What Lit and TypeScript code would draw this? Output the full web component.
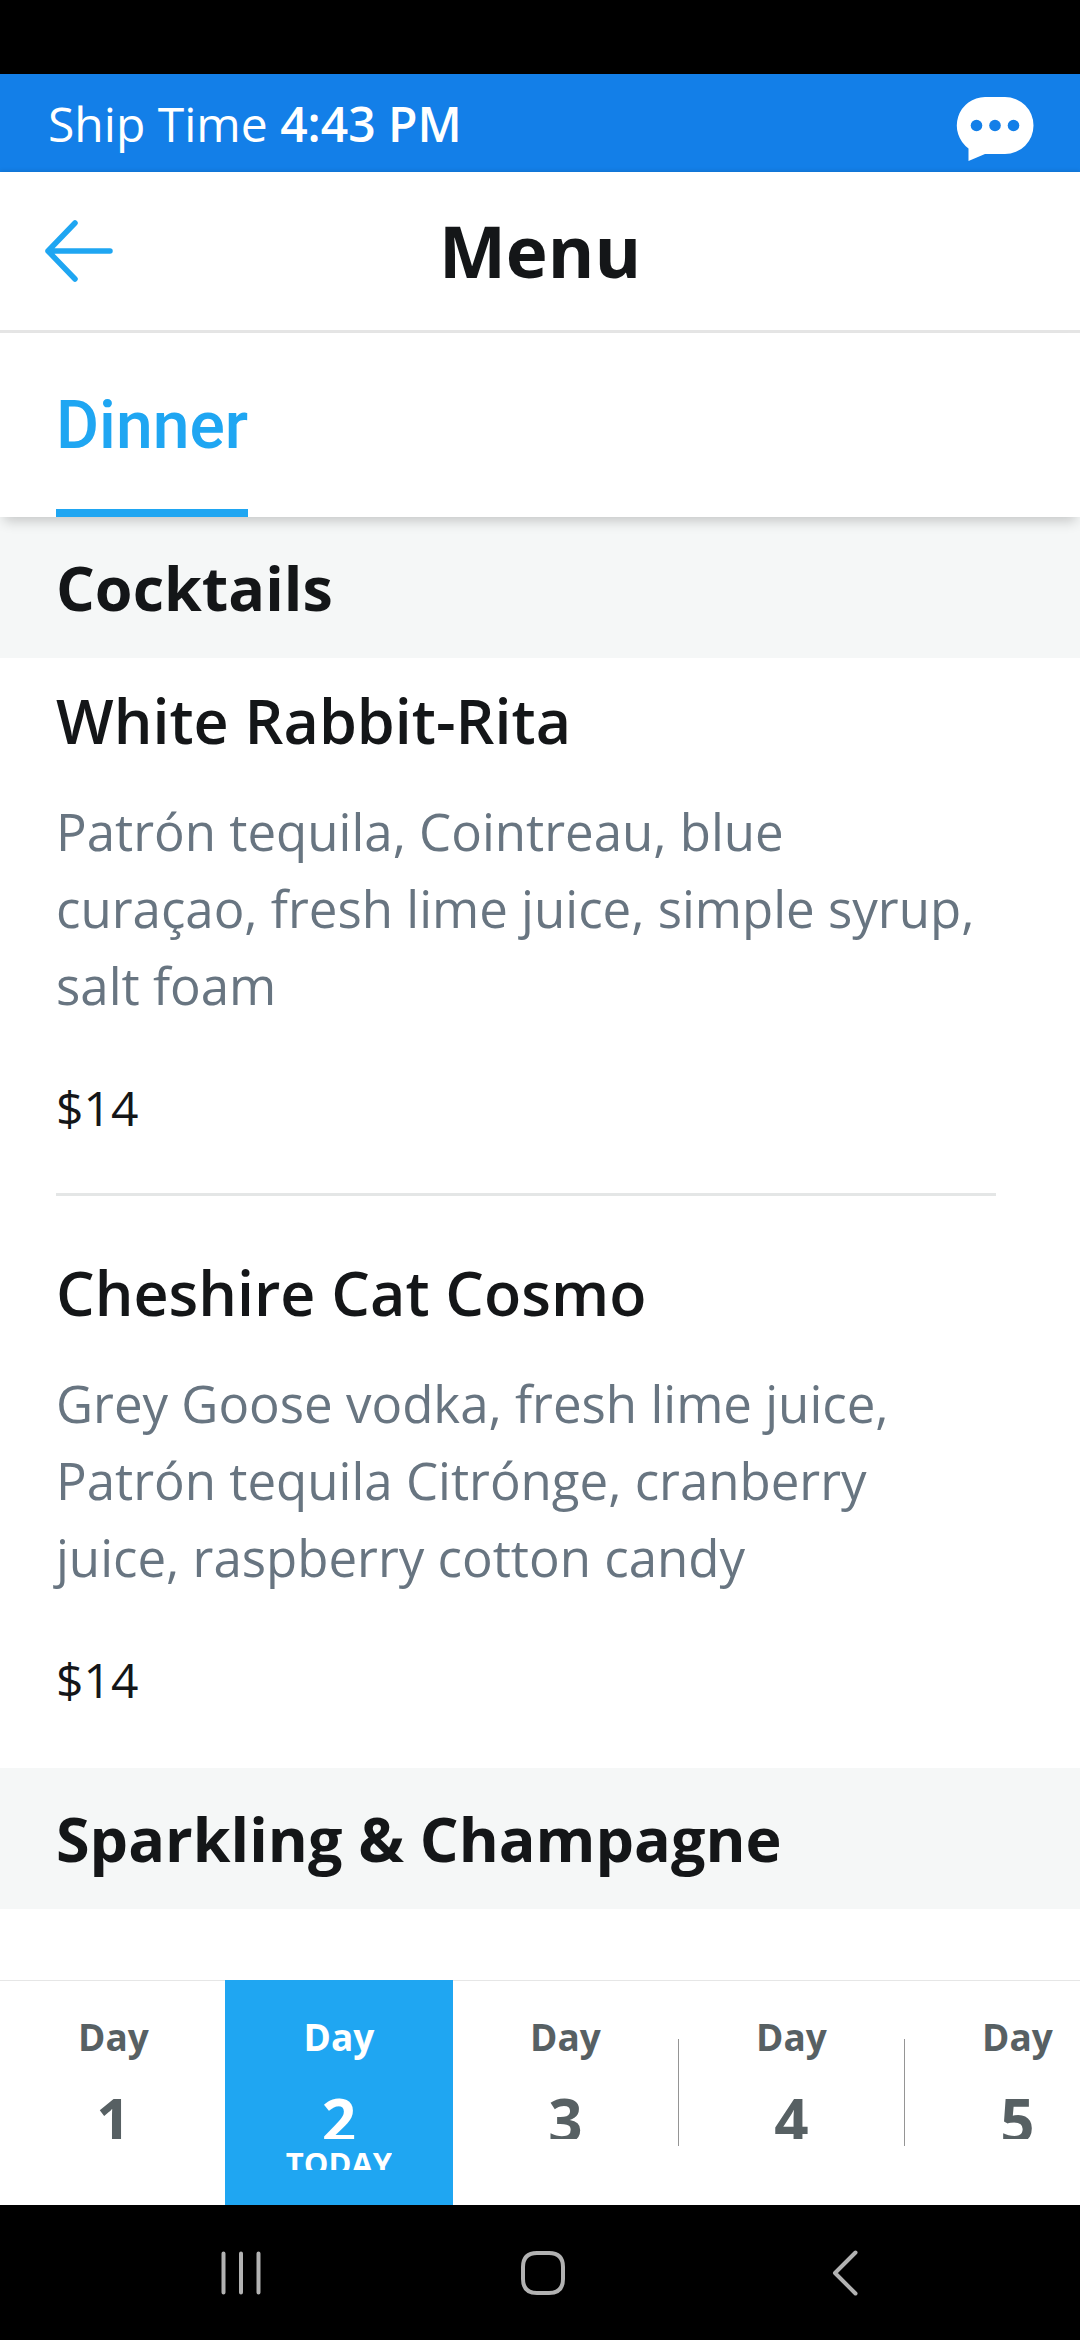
import { LitElement, html, css, nothing } from "lit";
import { customElement, property, state } from "lit/decorators.js";
import { classMap } from "lit/directives/class-map.js";

interface Dish {
  name: string;
  description: string;
  price: string;
}

interface Section {
  title: string;
  dishes: Dish[];
}

const SECTIONS: Section[] = [
  {
    title: "Cocktails",
    dishes: [
      {
        name: "White Rabbit-Rita",
        description:
          "Patrón tequila, Cointreau, blue curaçao, fresh lime juice, simple syrup, salt foam",
        price: "$14",
      },
      {
        name: "Cheshire Cat Cosmo",
        description:
          "Grey Goose vodka, fresh lime juice, Patrón tequila Citrónge, cranberry juice, raspberry cotton candy",
        price: "$14",
      },
    ],
  },
  { title: "Sparkling & Champagne", dishes: [] },
];

@customElement("ship-bar")
export class ShipBar extends LitElement {
  static styles = css`
    :host {
      display: block;
      padding-top: 74px;
      background: #000;
    }
    .bar {
      display: flex;
      align-items: center;
      justify-content: space-between;
      height: 98px;
      padding: 0 45px 0 48px;
      background: #137fe8;
      color: #fff;
      font-size: 48px;
    }
    .time {
      font-weight: 600;
    }
    .chat {
      display: flex;
      padding: 12px 0 0;
      border: 0;
      background: none;
    }
  `;

  render() {
    return html`
      <div class="bar">
        <span>Ship Time <span class="time">4:43 PM</span></span>
        <button class="chat" aria-label="Chat">
          <svg width="80" height="66" viewBox="0 0 80 66">
            <path
              fill="#fff"
              d="M30 1H50A28.500 28.500 0 0 1 50 58H30L13.500 65V52.500A28.500 28.500 0 0 1 30 1Z"
            />
            <circle cx="21.500" cy="29.500" r="5.800" fill="#137fe8" />
            <circle cx="40" cy="29.500" r="5.800" fill="#137fe8" />
            <circle cx="58.500" cy="29.500" r="5.800" fill="#137fe8" />
          </svg>
        </button>
      </div>
    `;
  }
}

@customElement("menu-section")
export class MenuSection extends LitElement {
  @property({ attribute: false }) section!: Section;

  static styles = css`
    :host {
      display: block;
    }
    h2,
    h3,
    p {
      margin: 0;
    }
    .title {
      padding: 0 56px;
      background: #f5f7f7;
      font-size: 61px;
      font-weight: 700;
      line-height: 141px;
    }
    .dish {
      margin: 0 84px 0 56px;
      padding: 55px 0 47px;
      border-bottom: 3px solid #e4e6e6;
    }
    .dish:first-of-type {
      padding-top: 21px;
    }
    .dish:last-of-type {
      border-color: transparent;
    }
    .name {
      font-size: 61px;
      font-weight: 600;
      line-height: 84px;
    }
    .description {
      margin-top: 30px;
      padding-right: 16px;
      color: #687581;
      font-size: 51px;
      line-height: 77px;
    }
    .price {
      margin-top: 45px;
      font-size: 48px;
      line-height: 77px;
    }
  `;

  render() {
    return html`
      <h2 class="title">${this.section.title}</h2>
      ${this.section.dishes.map(
        (dish) => html`
          <article class="dish">
            <h3 class="name">${dish.name}</h3>
            <p class="description">${dish.description}</p>
            <p class="price">${dish.price}</p>
          </article>
        `
      )}
    `;
  }
}

@customElement("day-strip")
export class DayStrip extends LitElement {
  @property({ type: Number }) today = 2;
  @state() private selected = 2;

  static styles = css`
    :host {
      display: flex;
      align-items: stretch;
      height: 225px;
      padding-left: 1px;
      overflow: hidden;
      background: linear-gradient(#e6e6e6 1px, #fff 1px);
    }
    .day {
      display: flex;
      flex: none;
      flex-direction: column;
      align-items: center;
      width: 225px;
      padding: 32px 0 0;
      border: 0;
      background: none;
      color: #576063;
      font: inherit;
      font-weight: 700;
    }
    .day.selected {
      width: 228px;
      margin: 0 -1px 0 -2px;
      background: #1fa6f2;
      color: #fff;
    }
    .label {
      font-size: 37px;
      line-height: 50px;
    }
    .number {
      height: 49px;
      margin-top: 28px;
      overflow: hidden;
      font-size: 60px;
      line-height: 60px;
    }
    .today {
      height: 22px;
      margin-top: 9px;
      overflow: hidden;
      font-size: 31px;
      line-height: 30px;
    }
    .rule {
      flex: none;
      width: 1px;
      margin: 59px 0;
      background: #959595;
    }
    .rule.hidden {
      background: none;
    }
  `;

  render() {
    return [1, 2, 3, 4, 5].map((day) => {
      const besideSelected = day === this.selected || day + 1 === this.selected;
      return html`
        <button
          class=${classMap({ day: true, selected: day === this.selected })}
          @click=${() => (this.selected = day)}
        >
          <span class="label">Day</span>
          <span class="number">${day}</span>
          ${day === this.today ? html`<span class="today">TODAY</span>` : nothing}
        </button>
        <span class=${classMap({ rule: true, hidden: besideSelected })}></span>
      `;
    });
  }
}

@customElement("system-nav")
export class SystemNav extends LitElement {
  static styles = css`
    :host {
      display: flex;
      align-items: center;
      justify-content: center;
      gap: 206px;
      height: 135px;
      padding-left: 6px;
      background: #000;
    }
    button {
      display: flex;
      width: 96px;
      justify-content: center;
      padding: 0;
      border: 0;
      background: none;
    }
    svg {
      fill: none;
      stroke: #b2b2b2;
      stroke-width: 4;
      stroke-linecap: round;
      stroke-linejoin: round;
    }
  `;

  render() {
    return html`
      <button aria-label="Recent apps">
        <svg width="48" height="48" viewBox="0 0 48 48">
          <path d="M6.500 4.500V43.500M24 4.500V43.500M41.500 4.500V43.500" />
        </svg>
      </button>
      <button aria-label="Home">
        <svg width="48" height="48" viewBox="0 0 48 48">
          <path
            d="M18 4H30Q44 4 44 18V30Q44 44 30 44H18Q4 44 4 30V18Q4 4 18 4Z"
          />
        </svg>
      </button>
      <button aria-label="Back">
        <svg width="48" height="48" viewBox="0 0 48 48">
          <path d="M34.500 3.500L14 24L34.500 44.500" />
        </svg>
      </button>
    `;
  }
}

@customElement("app-root")
export class AppRoot extends LitElement {
  static styles = css`
    :host {
      display: flex;
      flex-direction: column;
      min-height: 100vh;
      background: #fff;
      color: #141618;
      font-family: "Open Sans", "Noto Sans", sans-serif;
    }
    .header {
      position: relative;
      display: grid;
      grid-template-columns: 1fr auto 1fr;
      align-items: center;
      height: 158px;
      padding: 0 42px;
      border-bottom: 3px solid #e5e5e5;
      background: #fff;
      box-shadow: 0 -1px 4px rgba(0, 0, 0, 0.12);
    }
    .back {
      display: flex;
      justify-self: start;
      padding: 0;
      border: 0;
      background: none;
    }
    .heading {
      margin: 0;
      font-size: 71px;
      font-weight: 700;
      line-height: 96px;
    }
    .tabs {
      position: relative;
      display: flex;
      height: 184px;
      padding: 0 56px;
      background: #fff;
      box-shadow: 0 8px 12px -4px rgba(0, 0, 0, 0.2);
    }
    .tab {
      padding: 8px 0 0;
      border: 0;
      border-bottom: 8px solid #1fa6f2;
      background: none;
      color: #1fa6f2;
      font: 500 66px Roboto, sans-serif;
    }
    .content {
      flex: 1;
    }
  `;

  render() {
    return html`
      <ship-bar></ship-bar>
      <header class="header">
        <button class="back" aria-label="Back">
          <svg
            width="74"
            height="62"
            viewBox="0 0 74 62"
            fill="none"
            stroke="#1fa6f2"
            stroke-width="5.500"
            stroke-linecap="round"
            stroke-linejoin="round"
          >
            <path d="M33 3L6 31L33 59M6 31H68" />
          </svg>
        </button>
        <h1 class="heading">Menu</h1>
      </header>
      <nav class="tabs">
        <button class="tab">Dinner</button>
      </nav>
      <main class="content">
        ${SECTIONS.map(
          (section) => html`<menu-section .section=${section}></menu-section>`
        )}
      </main>
      <day-strip></day-strip>
      <system-nav></system-nav>
    `;
  }
}
